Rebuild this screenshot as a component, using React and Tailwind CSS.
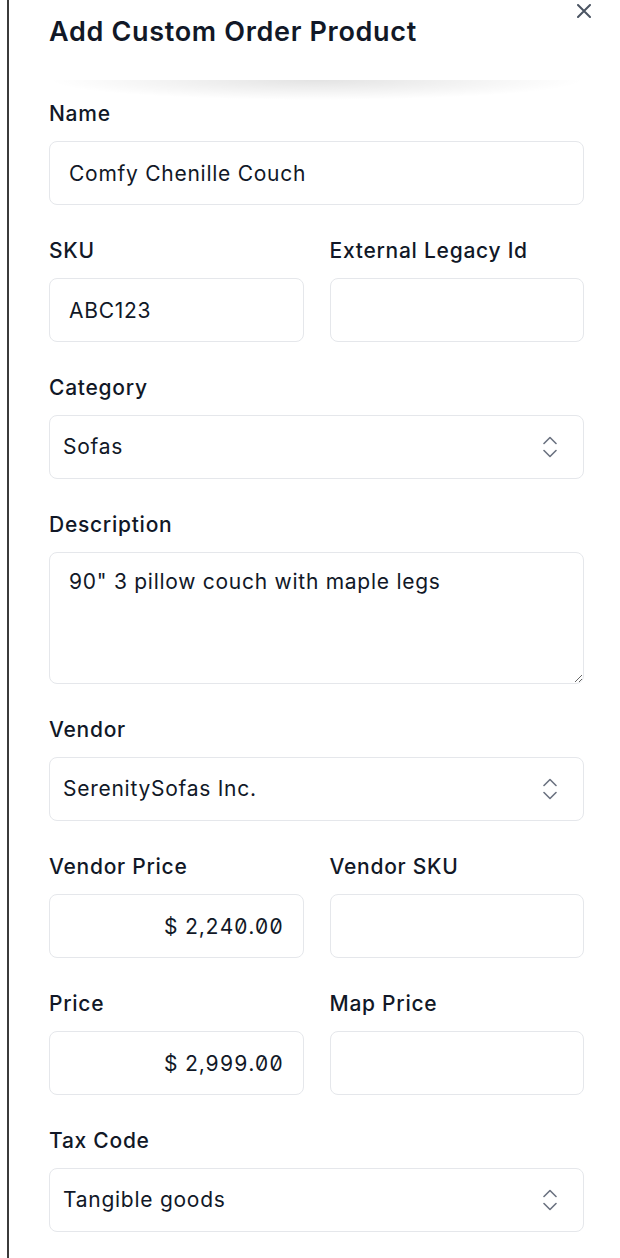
import React from 'react';

const inputCls =
  'block w-full h-16 rounded-lg border border-[#e5e7eb] bg-white px-[19px] text-[21px] tracking-[0.035em] text-[#111827] outline-none';

const Label = ({ children }) => (
  <label className="block text-[21px] leading-7 tracking-[0.035em] font-medium text-[#111827] mb-[13px]">{children}</label>
);

const UpDown = () => (
  <svg width="14" height="22" viewBox="0 0 14 22" fill="none" stroke="#6b7280" strokeWidth="1.6" strokeLinecap="round" strokeLinejoin="round">
    <path d="M1 7.5 7 1.5l6 6" />
    <path d="M1 14.5l6 6 6-6" />
  </svg>
);

const SelectBox = ({ value }) => (
  <div className="flex h-16 w-full items-center justify-between rounded-lg border border-[#e5e7eb] bg-white pl-[13px] pr-[26px] text-[21px] tracking-[0.035em] text-[#111827]">
    <span>{value}</span>
    <UpDown />
  </div>
);

const Field = ({ label, children }) => (
  <div>
    <Label>{label}</Label>
    {children}
  </div>
);

const App = () => {
  return (
    <div className="min-h-[1258px] bg-white pl-[7px]" style={{ fontFamily: 'Inter, "Noto Sans", sans-serif' }}>
      <div className="relative min-h-[1258px] border-l-2 border-[#3b3b3b] pl-10 pr-9">
        <button className="absolute right-[29px] top-[4px] text-[#4b5563]" aria-label="Close">
          <svg width="14" height="14" viewBox="0 0 14 14" stroke="currentColor" strokeWidth="2" strokeLinecap="round">
            <path d="M1 1l12 12M13 1 1 13" />
          </svg>
        </button>

        <h2 className="pt-4 text-[27px] leading-8 tracking-[0.025em] font-semibold text-[#111827]">Add Custom Order Product</h2>
        {/* fade shadow under the header */}
        <div className="mt-8 h-5 bg-[radial-gradient(ellipse_50%_100%_at_50%_0%,rgba(0,0,0,0.11),rgba(0,0,0,0)_100%)]" />

        <form className="flex flex-col gap-8">
          <Field label="Name">
            <input className={inputCls} value="Comfy Chenille Couch" readOnly />
          </Field>

          <div className="grid grid-cols-2 gap-[26px]">
            <Field label="SKU">
              <input className={inputCls} value="ABC123" readOnly />
            </Field>
            <Field label="External Legacy Id">
              <input className={inputCls} value="" readOnly />
            </Field>
          </div>

          <Field label="Category">
            <SelectBox value="Sofas" />
          </Field>

          <Field label="Description">
            <textarea
              className="mt-[5px] block h-[132px] w-full rounded-lg border border-[#e5e7eb] bg-white px-[19px] pt-[15px] pb-[15px] text-[21px] leading-7 tracking-[0.035em] text-[#111827] outline-none"
              value={'90" 3 pillow couch with maple legs'}
              readOnly
            />
          </Field>

          <Field label="Vendor">
            <SelectBox value="SerenitySofas Inc." />
          </Field>

          <div className="grid grid-cols-2 gap-[26px]">
            <Field label="Vendor Price">
              <input className={`${inputCls} text-right slashed-zero tabular-nums`} value="$ 2,240.00" readOnly />
            </Field>
            <Field label="Vendor SKU">
              <input className={inputCls} value="" readOnly />
            </Field>
          </div>

          <div className="grid grid-cols-2 gap-[26px]">
            <Field label="Price">
              <input className={`${inputCls} text-right slashed-zero tabular-nums`} value="$ 2,999.00" readOnly />
            </Field>
            <Field label="Map Price">
              <input className={inputCls} value="" readOnly />
            </Field>
          </div>

          <Field label="Tax Code">
            <SelectBox value="Tangible goods" />
          </Field>
        </form>
      </div>
    </div>
  );
};

export default App;
